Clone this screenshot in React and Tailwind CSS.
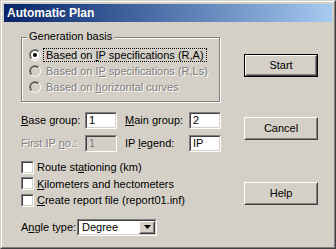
import React from "react";

const font = { fontFamily: '"Liberation Sans", Arial, sans-serif' };

const Sunken = ({ className = "", inner = "bg-white", children }) => (
  <div className={"border border-t-[#808080] border-l-[#808080] border-b-white border-r-white " + className}>
    <div className={"h-full w-full border border-t-[#404040] border-l-[#404040] border-b-[#d4d0c8] border-r-[#d4d0c8] " + inner}>
      {children}
    </div>
  </div>
);

const Raised = ({ className = "", children }) => (
  <div className={"border border-t-white border-l-white border-b-[#404040] border-r-[#404040] " + className}>
    <div className="flex h-full w-full items-center justify-center border border-t-[#d4d0c8] border-l-[#d4d0c8] border-b-[#808080] border-r-[#808080] bg-[#d4d0c8]">
      {children}
    </div>
  </div>
);

const Radio = ({ checked, disabled, children, focus }) => (
  <div className="flex h-[16px] items-center">
    <div className="h-[12px] w-[12px] rounded-full border border-t-[#808080] border-l-[#808080] border-b-white border-r-white">
      <div
        className={
          "flex h-full w-full items-center justify-center rounded-full border border-t-[#404040] border-l-[#404040] border-b-[#d4d0c8] border-r-[#d4d0c8] " +
          (disabled ? "bg-[#d4d0c8]" : "bg-white")
        }
      >
        {checked && <div className="h-[4px] w-[4px] rounded-full bg-black" />}
      </div>
    </div>
    <span
      className={
        "ml-[2px] px-[2px] leading-[12px] " +
        (focus ? "border border-dotted border-black " : "border border-transparent ") +
        (disabled ? "text-[#808080] [text-shadow:1px_1px_0_#fff]" : "text-black")
      }
    >
      {children}
    </span>
  </div>
);

const Check = ({ children }) => (
  <div className="flex h-[16.5px] items-center">
    <Sunken className="h-[13px] w-[13px]" />
    <span className="ml-[3px]">{children}</span>
  </div>
);

const Field = ({ label, value, disabled, labelW }) => (
  <div className="flex items-center">
    <span
      className={
        labelW + " " + (disabled ? "text-[#808080] [text-shadow:1px_1px_0_#fff]" : "text-black")
      }
    >
      {label}
    </span>
    <Sunken
      className="h-[17px] w-[32px]"
      inner={disabled ? "bg-[#d4d0c8]" : "bg-white"}
    >
      <span className={"block pl-[2px] leading-[13px] " + (disabled ? "text-[#808080]" : "text-black")}>
        {value}
      </span>
    </Sunken>
  </div>
);

export default function App() {
  return (
    <div
      className="h-[249px] w-[336px] border border-t-[#d4d0c8] border-l-[#d4d0c8] border-b-[#404040] border-r-[#404040] text-[11px] text-black"
      style={font}
    >
      <div className="flex h-full w-full flex-col border border-t-white border-l-white border-b-[#808080] border-r-[#808080] bg-[#d4d0c8] p-[2px]">
        <div className="flex h-[18px] items-center bg-gradient-to-r from-[#0a246a] to-[#a6caf0] pl-[3px]">
          <span className="text-[12px] font-bold text-white">Automatic Plan</span>
        </div>

        <div className="flex flex-1">
          {/* left column */}
          <div className="ml-[17px] mt-[15px] flex w-[199px] flex-col">
            <div className="relative h-[65px] border border-[#808080] shadow-[inset_1px_1px_0_#fff,1px_1px_0_#fff]">
              <span className="absolute -top-[8px] left-[5px] bg-[#d4d0c8] px-[2px] leading-[13px]">
                Generation basis
              </span>
              <div className="flex flex-col pl-[7px] pt-[9px]">
                <Radio checked focus>
                  Based on <span className="underline">I</span>P specifications (R,A)
                </Radio>
                <Radio disabled>
                  Based on I<span className="underline">P</span> specifications (R,Ls)
                </Radio>
                <Radio disabled>
                  Based on <span className="underline">h</span>orizontal curves
                </Radio>
              </div>
            </div>

            <div className="mt-[10px] flex gap-[8px]">
              <Field
                labelW="w-[64px]"
                label={<><span className="underline">B</span>ase group:</>}
                value="1"
              />
              <Field
                labelW="w-[64px]"
                label={<><span className="underline">M</span>ain group:</>}
                value="2"
              />
            </div>
            <div className="mt-[6px] flex gap-[8px]">
              <Field
                labelW="w-[64px]"
                disabled
                label={<>First IP <span className="underline">n</span>o.:</>}
                value="1"
              />
              <Field
                labelW="w-[64px]"
                label={<>IP <span className="underline">l</span>egend:</>}
                value="IP"
              />
            </div>

            <div className="mt-[7px] flex flex-col">
              <Check>
                Route st<span className="underline">a</span>tioning (km)
              </Check>
              <Check>
                <span className="underline">K</span>ilometers and hectometers
              </Check>
              <Check>
                <span className="underline">C</span>reate report file (report01.inf)
              </Check>
            </div>

            <div className="mt-[10px] flex items-center">
              <span className="w-[56px]">
                A<span className="underline">n</span>gle type:
              </span>
              <Sunken className="h-[17px] w-[80px]">
                <div className="flex h-full items-center">
                  <span className="flex-1 pl-[3px]">Degree</span>
                  <Raised className="h-full w-[16px]">
                    <svg width="7" height="4" viewBox="0 0 7 4">
                      <path d="M0 0h7L3.5 4z" fill="#000" />
                    </svg>
                  </Raised>
                </div>
              </Sunken>
            </div>
          </div>

          {/* right column */}
          <div className="ml-[24px] mt-[32px] flex w-[74px] flex-col">
            <div className="border border-black">
              <Raised className="h-[21px]">Start</Raised>
            </div>
            <Raised className="mt-[40px] h-[23px]">Cancel</Raised>
            <Raised className="mt-[42px] h-[23px]">Help</Raised>
          </div>
        </div>
      </div>
    </div>
  );
}
